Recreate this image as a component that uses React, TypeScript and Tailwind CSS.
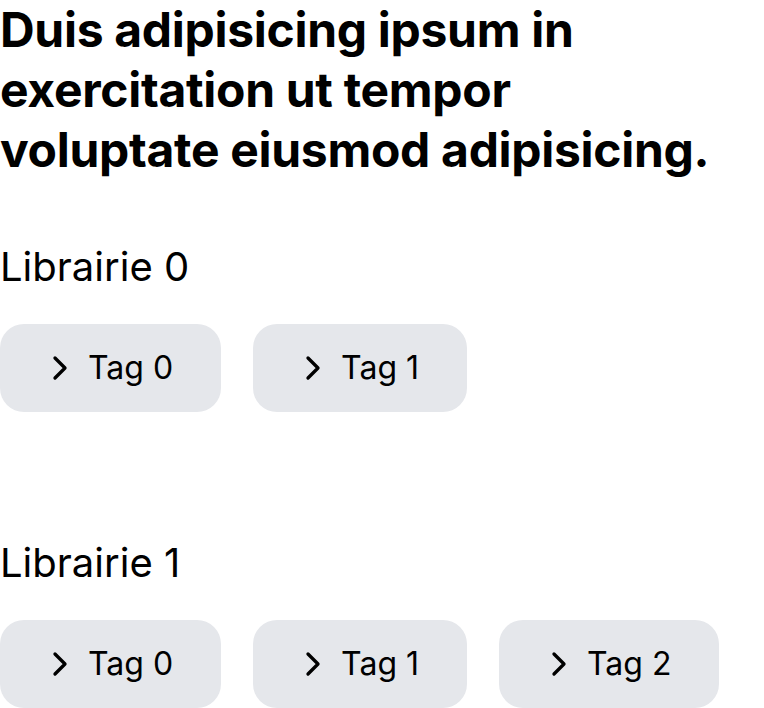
import React from "react";
import { ChevronRight } from "lucide-react";

const libs = [
  { name: "Librairie 0", tags: ["Tag 0", "Tag 1"] },
  { name: "Librairie 1", tags: ["Tag 0", "Tag 1", "Tag 2"] },
];

export default function App() {
  return (
    <div className="bg-white text-black" style={{ fontFamily: "Inter, 'Noto Sans', sans-serif" }}>
      <h1 className="max-w-[720px] text-[48px] leading-[60px] font-bold tracking-[-0.3px]">
        Duis adipisicing ipsum in exercitation ut tempor voluptate eiusmod adipisicing.
      </h1>
      {libs.map((lib) => (
        <section key={lib.name} className="pt-[57px] pb-[64px]">
          <h2 className="text-[40px] leading-[60px] font-normal">{lib.name}</h2>
          <div className="mt-[27px] flex gap-8">
            {lib.tags.map((t) => (
              <button
                key={t}
                className="flex items-center gap-2 rounded-3xl bg-gray-200 py-6 pl-10 pr-12 text-[32px] leading-[40px]"
              >
                <ChevronRight size={40} strokeWidth={2} />
                <span>{t}</span>
              </button>
            ))}
          </div>
        </section>
      ))}
    </div>
  );
}
